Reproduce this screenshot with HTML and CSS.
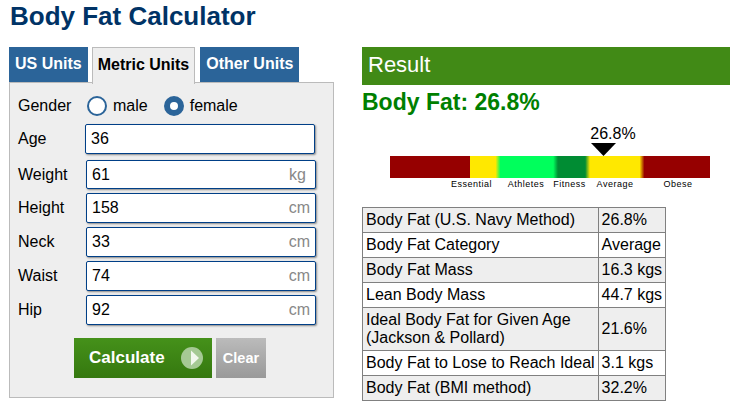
FILE: index.html
```html
<!DOCTYPE html>
<html lang="en">
<head>
  <title>Body Fat Calculator</title>
  <meta charset="utf-8" />
  <link rel="stylesheet" href="styles.css">
</head>
<body>
  <h1 class="title">Body Fat Calculator</h1>
  <div class="columns">
    <div class="calc">
      <div class="tabs">
        <a class="tab">US Units</a>
        <a class="tab tab-active">Metric Units</a>
        <a class="tab">Other Units</a>
      </div>
      <div class="panel">
        <div class="gender-row">
          <span class="label">Gender</span>
          <span class="radio"></span><span class="radio-text">male</span>
          <span class="radio radio-on"></span><span class="radio-text">female</span>
        </div>
        <div class="field-row field-first">
          <span class="label">Age</span>
          <div class="field field-age"><span>36</span></div>
        </div>
        <div class="field-row field-weight">
          <span class="label">Weight</span>
          <div class="field"><span>61</span><span class="unit">kg</span></div>
        </div>
        <div class="field-row">
          <span class="label">Height</span>
          <div class="field"><span>158</span><span class="unit">cm</span></div>
        </div>
        <div class="field-row">
          <span class="label">Neck</span>
          <div class="field"><span>33</span><span class="unit">cm</span></div>
        </div>
        <div class="field-row">
          <span class="label">Waist</span>
          <div class="field"><span>74</span><span class="unit">cm</span></div>
        </div>
        <div class="field-row">
          <span class="label">Hip</span>
          <div class="field"><span>92</span><span class="unit">cm</span></div>
        </div>
        <div class="buttons">
          <button class="btn-calc">Calculate
            <svg class="play" width="22" height="22" viewBox="0 0 22 22">
              <circle cx="11" cy="11" r="11" fill="#a5c994"/>
              <polygon points="10,3.500 18,11 10,18.500" fill="#f2f7ee"/>
            </svg>
          </button>
          <button class="btn-clear">Clear</button>
        </div>
      </div>
    </div>

    <div class="result">
      <h2 class="result-head">Result</h2>
      <div class="result-big">Body Fat: 26.8%</div>
      <svg class="gauge" width="330" height="62" viewBox="0 0 330 62">
        <defs>
          <linearGradient id="scale" x1="0" x2="320" y1="0" y2="0" gradientUnits="userSpaceOnUse">
            <stop offset="0.25" stop-color="#960000"/>
            <stop offset="0.25" stop-color="#ffe800"/>
            <stop offset="0.33" stop-color="#ffe800"/>
            <stop offset="0.345" stop-color="#00ff5c"/>
            <stop offset="0.51" stop-color="#00ff5c"/>
            <stop offset="0.525" stop-color="#008c33"/>
            <stop offset="0.61" stop-color="#008c33"/>
            <stop offset="0.625" stop-color="#ffe800"/>
            <stop offset="0.78" stop-color="#ffe800"/>
            <stop offset="0.795" stop-color="#960000"/>
          </linearGradient>
        </defs>
        <text class="gauge-value" x="223" y="16" text-anchor="middle">26.8%</text>
        <polygon points="201,20 226,20 213.500,33" fill="#000"/>
        <rect x="0" y="33" width="320" height="22" fill="url(#scale)"/>
        <text class="gauge-label" x="81.500" y="64" text-anchor="middle">Essential</text>
        <text class="gauge-label" x="136" y="64" text-anchor="middle">Athletes</text>
        <text class="gauge-label" x="179.500" y="64" text-anchor="middle">Fitness</text>
        <text class="gauge-label" x="225" y="64" text-anchor="middle">Average</text>
        <text class="gauge-label" x="288" y="64" text-anchor="middle">Obese</text>
      </svg>
      <table class="result-table">
        <tr class="shade"><td>Body Fat (U.S. Navy Method)</td><td>26.8%</td></tr>
        <tr><td>Body Fat Category</td><td>Average</td></tr>
        <tr class="shade"><td>Body Fat Mass</td><td>16.3 kgs</td></tr>
        <tr><td>Lean Body Mass</td><td>44.7 kgs</td></tr>
        <tr class="shade"><td>Ideal Body Fat for Given Age<br>(Jackson &amp; Pollard)</td><td>21.6%</td></tr>
        <tr><td>Body Fat to Lose to Reach Ideal</td><td>3.1 kgs</td></tr>
        <tr class="shade"><td>Body Fat (BMI method)</td><td>32.2%</td></tr>
      </table>
    </div>
  </div>
</body>
</html>
```

FILE: styles.css
```css
body{
  margin: 0;
  padding: 0 0 0 9px;
  background: #fff;
  color: #000;
  font-family: "Liberation Sans", Arial, sans-serif;
  overflow: hidden;
}
.title{
  margin: 0;
  padding: 0 0 0 1px;
  height: 47px;
  color: #003366;
  font-size: 26px;
  line-height: 32px;
  font-weight: bold;
}
.columns{
  display: flex;
  gap: 28px;
}
.calc{
  width: 325px;
}
.tabs{
  display: flex;
  height: 35px;
}
.tab{
  height: 35px;
  margin-right: 4px;
  padding: 0 6px;
  background: #2b6499;
  color: #fff;
  font-size: 16px;
  font-weight: bold;
  line-height: 34px;
}
.tab-active{
  height: 36px;
  margin-right: 5px;
  padding: 0 5px;
  border: 1px solid #bbb;
  border-bottom: 0;
  background: #eee;
  color: #000;
  position: relative;
  z-index: 1;
}
.panel{
  box-sizing: border-box;
  height: 316px;
  padding: 13px 0 0 8px;
  border: 1px solid #bbb;
  background: #eee;
}
.label{
  width: 68px;
  flex-shrink: 0;
  font-size: 16px;
}
.gender-row{
  display: flex;
  align-items: center;
  height: 20px;
}
.radio{
  box-sizing: border-box;
  width: 20px;
  height: 20px;
  margin: 0 6px 0 1px;
  border: 2px solid #2b6499;
  border-radius: 50%;
  background: #fff;
}
.radio-on{
  border: 6px solid #2b6499;
  margin-left: 16px;
}
.radio-text{
  font-size: 16px;
}
.field-row{
  display: flex;
  align-items: center;
  margin-top: 4px;
}
.field-first{
  margin-top: 8px;
}
.field-weight{
  margin-top: 6px;
}
.field{
  box-sizing: border-box;
  display: flex;
  justify-content: space-between;
  align-items: center;
  width: 230px;
  height: 30px;
  padding: 0 5px;
  border: 1px solid #003f87;
  border-radius: 2px;
  background: #fff;
  box-shadow: 1px 1px 2px #888;
  font-size: 16px;
  line-height: 28px;
}
.field-weight .field{
  height: 29px;
  padding-right: 9px;
}
.field-age{
  margin-left: -1px;
}
.unit{
  color: #888;
}
.buttons{
  display: flex;
  gap: 4px;
  margin: 13px 0 0 56px;
}
.btn-calc,
.btn-clear{
  height: 40px;
  padding: 0;
  border: 0;
  color: #fff;
  font-family: inherit;
  font-weight: bold;
}
.btn-calc{
  display: flex;
  align-items: center;
  justify-content: space-between;
  box-sizing: border-box;
  width: 138px;
  padding: 0 9px 0 15px;
  background: linear-gradient(#45911a, #35780f);
  font-size: 17px;
}
.btn-clear{
  width: 50px;
  background: linear-gradient(#bbb, #999);
  font-size: 14.500px;
}
.result{
  width: 368px;
}
.result-head{
  margin: 0;
  height: 38px;
  padding-left: 6px;
  background: #418a16;
  color: #fff;
  font-size: 22px;
  font-weight: normal;
  line-height: 36px;
}
.result-big{
  margin-top: 4px;
  color: #007f00;
  font-size: 23px;
  font-weight: bold;
  line-height: 27px;
}
.gauge{
  display: block;
  margin: 7px 0 0 28px;
  overflow: visible;
}
.gauge-value{
  font-size: 16px;
}
.gauge-label{
  font-size: 9px;
  letter-spacing: 0.5px;
}
.result-table{
  margin-top: 22px;
  border-collapse: collapse;
  font-size: 16px;
}
.result-table td{
  padding: 3px 3px;
  border: 1px solid #808080;
  line-height: 18px;
}
.shade td{
  background: #eee;
}
```
